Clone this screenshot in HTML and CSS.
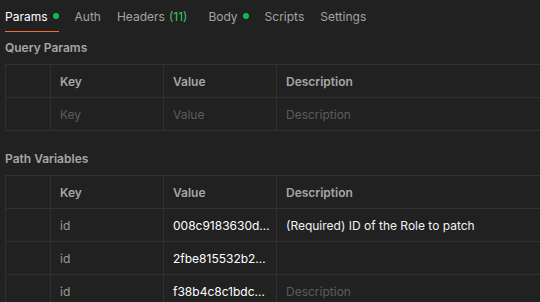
FILE: index.html
```html
<!DOCTYPE html>
<html lang="en">
<head>
  <meta charset="UTF-8" />
  <title>Params</title>
  <link rel="stylesheet" href="styles.css">
</head>
<body>
  <nav class="tabs">
    <a class="tab active">Params <span class="dot"></span></a>
    <a class="tab">Auth</a>
    <a class="tab">Headers <span class="count">(11)</span></a>
    <a class="tab tab-wide">Body <span class="dot"></span></a>
    <a class="tab">Scripts</a>
    <a class="tab">Settings</a>
  </nav>

  <h2 class="section-title">Query Params</h2>
  <table class="kv">
    <tr class="head">
      <td class="handle"></td><td class="key">Key</td><td class="value">Value</td><td class="desc">Description</td>
    </tr>
    <tr>
      <td class="handle"></td><td class="key ph">Key</td><td class="value ph">Value</td><td class="desc ph">Description</td>
    </tr>
  </table>

  <h2 class="section-title path">Path Variables</h2>
  <table class="kv">
    <tr class="head">
      <td class="handle"></td><td class="key">Key</td><td class="value">Value</td><td class="desc">Description</td>
    </tr>
    <tr>
      <td class="handle"></td><td class="key ro">id</td><td class="value"><div class="cut">008c9183630d4e6b9a21</div></td><td class="desc">(Required) ID of the Role to patch</td>
    </tr>
    <tr>
      <td class="handle"></td><td class="key ro">id</td><td class="value"><div class="cut">2fbe815532b24f7e</div></td><td class="desc"></td>
    </tr>
    <tr>
      <td class="handle"></td><td class="key ro">id</td><td class="value"><div class="cut">f38b4c8c1bdc4a90</div></td><td class="desc ph">Description</td>
    </tr>
  </table>
</body>
</html>
```

FILE: styles.css
```css
html, body {
  margin: 0; background: #212121; overflow: hidden;
}
body {
  font-family: Inter, "Noto Sans", sans-serif; font-size: 12px; color: #e6e6e6;
  padding: 0 0 0 5px; width: 760px;
}
.tabs {
  display: flex; height: 32px; align-items: stretch;
}
.tab {
  display: flex; align-items: center; gap: 5px;
  color: #a3a3a3; margin-right: 16px; position: relative;
}
.tab.active { color: #fff; }
.tab.active::after {
  content: ""; position: absolute; left: 0; right: 0; bottom: 0; height: 1px; background: #f26b3a;
}
.tab-wide { margin-left: 5px; }
.dot {
  width: 6px; height: 6px; border-radius: 50%; background: #0cbb52; display: inline-block;
}
.count { color: #3cc568; margin-left: -1px; }
.section-title {
  margin: 0; font-size: 12px; font-weight: 600; color: #a6a6a6;
  height: 32px; line-height: 32px;
}
.section-title.path { margin-top: 12px; }
.kv {
  border-collapse: collapse; table-layout: fixed; width: 740px;
}
.kv td {
  border: 1px solid #303030; height: 33px; padding: 0 9px; box-sizing: border-box;
  white-space: nowrap; overflow: hidden;
}
.kv .handle { width: 45px; }
.kv .key { width: 113px; }
.kv .value { width: 113px; color: #fff; padding-right: 5px; }
.kv td.desc { color: #f2f2f2; }
.kv .head td { color: #a6a6a6; font-weight: 600; }
.kv td.ph { color: #5c5c5c; font-weight: 400; }
.kv td.ro { color: #9c9c9c; }
.cut { overflow: hidden; text-overflow: ellipsis; white-space: nowrap; }
```
